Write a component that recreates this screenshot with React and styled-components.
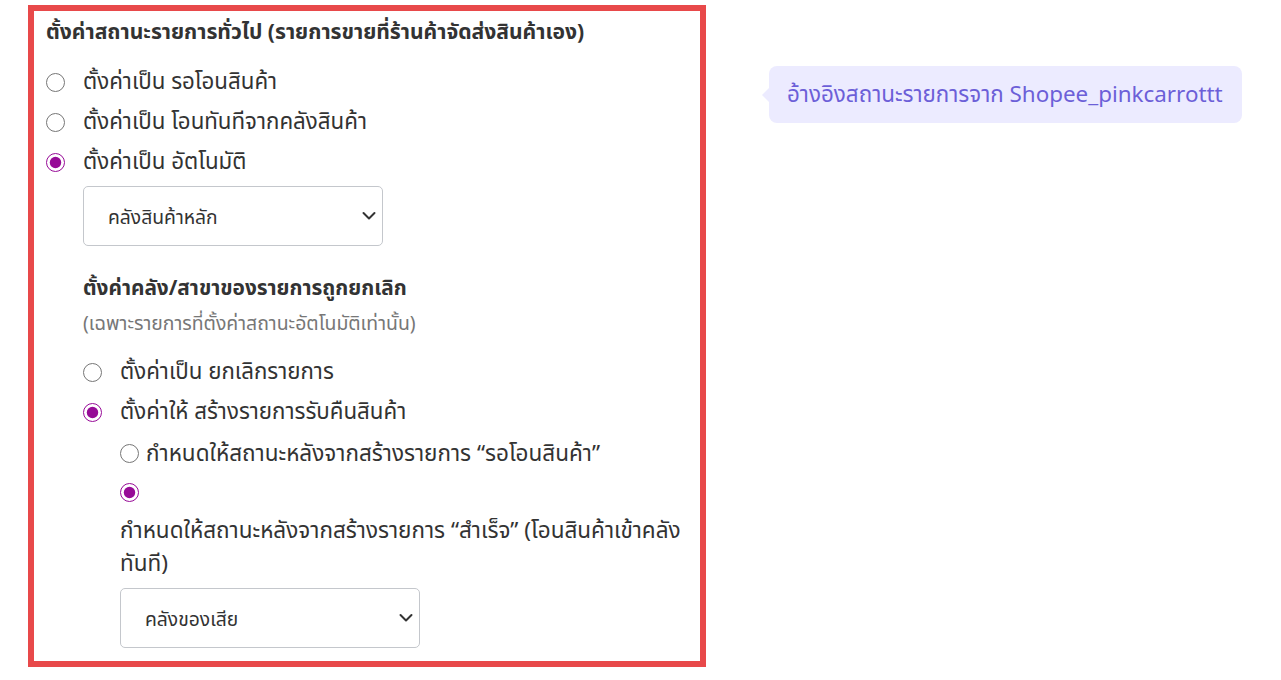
import React from "react";
import styled, { createGlobalStyle } from "styled-components";

const Global = createGlobalStyle`
  html, body { margin: 0; padding: 0; background: #fff; }
  body { font-family: "Noto Sans", "Noto Sans Thai", sans-serif; color: #333; }
  * { box-sizing: border-box; }
`;

const Page = styled.div`
  display: flex;
  align-items: flex-start;
  gap: 63px;
  padding: 5px 0 0 28px;
`;

const Panel = styled.section`
  width: 678px;
  border: 6px solid #e8494a;
  padding: 3px 12px 13px 12px;
`;

const Title = styled.h3`
  margin: 0 0 14px;
  font-size: 21.1px;
  font-weight: 700;
  line-height: 34px;
  color: #333;
  white-space: nowrap;
`;

const SubTitle = styled.h4`
  margin: 24px 0 0 37px;
  font-size: 20.8px;
  font-weight: 700;
  line-height: 34px;
  color: #333;
`;

const Note = styled.div`
  margin: 6px 0 16px 37px;
  font-size: 19.4px;
  line-height: 26px;
  color: #777;
`;

const Option = styled.label`
  display: flex;
  align-items: center;
  gap: 18px;
  height: 40px;
  margin-left: ${(p) => p.$indent || 0}px;
  font-size: 22.3px;
  color: #333;
  white-space: nowrap;
`;

const Radio = styled.input.attrs({ type: "radio" })`
  margin: 0;
  width: 19px;
  height: 19px;
  accent-color: #970b97;
  flex: none;
`;

const Nested = styled.div`
  margin-left: 74px;
  font-size: 22.5px;
  line-height: 33px;
  color: #333;
`;

const NestedRow = styled.div`
  padding-top: ${(p) => p.$top || 0}px;
`;

const InlineRadio = styled(Radio)`
  vertical-align: -2px;
  margin-right: 7px;
`;

const InlineLabel = styled.span`
  display: inline-block;
  margin-top: ${(p) => p.$gap || 0}px;
`;

const SelectBox = styled.div`
  position: relative;
  width: 300px;
  margin: ${(p) => p.$margin};
`;

const Select = styled.select`
  appearance: none;
  -webkit-appearance: none;
  width: 300px;
  height: 60px;
  padding: 0 40px 0 24px;
  border: 1px solid #c4c7cc;
  border-radius: 5px;
  background: #fff;
  font-family: inherit;
  font-size: 19.3px;
  color: #333;
  display: block;
`;

const Chevron = styled.svg`
  position: absolute;
  right: 7px;
  top: 50%;
  transform: translateY(-50%);
  pointer-events: none;
`;

const Tip = styled.div`
  position: relative;
  margin-top: 61px;
  background: #ecebff;
  color: #6c5fd8;
  border-radius: 8px;
  padding: 0 19px 0 18px;
  height: 57px;
  display: flex;
  align-items: center;
  font-size: 22.4px;
  white-space: nowrap;
  &::before {
    content: "";
    position: absolute;
    left: -7px;
    top: 50%;
    transform: translateY(-50%);
    border-top: 7px solid transparent;
    border-bottom: 7px solid transparent;
    border-right: 7px solid #ecebff;
  }
`;

function Dropdown({ value, label, margin }) {
  return (
    <SelectBox $margin={margin}>
      <Select defaultValue={value}>
        <option value={value}>{label}</option>
      </Select>
      <Chevron width="14" height="9" viewBox="0 0 14 9" fill="none">
        <path d="M1.5 1.5 L7 7 L12.5 1.5" stroke="#333" strokeWidth="2" strokeLinecap="round" strokeLinejoin="round" />
      </Chevron>
    </SelectBox>
  );
}

export default function App() {
  return (
    <>
      <Global />
      <Page>
        <Panel>
          <Title>ตั้งค่าสถานะรายการทั่วไป (รายการขายที่ร้านค้าจัดส่งสินค้าเอง)</Title>
          <Option>
            <Radio name="g1" />
            ตั้งค่าเป็น รอโอนสินค้า
          </Option>
          <Option>
            <Radio name="g1" />
            ตั้งค่าเป็น โอนทันทีจากคลังสินค้า
          </Option>
          <Option>
            <Radio name="g1" defaultChecked />
            ตั้งค่าเป็น อัตโนมัติ
          </Option>
          <Dropdown value="main" label="คลังสินค้าหลัก" margin="4px 0 0 37px" />
          <SubTitle>ตั้งค่าคลัง/สาขาของรายการถูกยกเลิก</SubTitle>
          <Note>(เฉพาะรายการที่ตั้งค่าสถานะอัตโนมัติเท่านั้น)</Note>
          <Option $indent={37}>
            <Radio name="g2" />
            ตั้งค่าเป็น ยกเลิกรายการ
          </Option>
          <Option $indent={37}>
            <Radio name="g2" defaultChecked />
            ตั้งค่าให้ สร้างรายการรับคืนสินค้า
          </Option>
          <Nested>
            <NestedRow $top={4}>
              <InlineRadio name="g3" />
              <InlineLabel>กำหนดให้สถานะหลังจากสร้างรายการ “รอโอนสินค้า”</InlineLabel>
            </NestedRow>
            <NestedRow $top={6}>
              <InlineRadio name="g3" defaultChecked />
              <InlineLabel $gap={5}>กำหนดให้สถานะหลังจากสร้างรายการ “สำเร็จ” (โอนสินค้าเข้าคลังทันที)</InlineLabel>
            </NestedRow>
            <Dropdown value="bad" label="คลังของเสีย" margin="9px 0 0 0" />
          </Nested>
        </Panel>
        <Tip>อ้างอิงสถานะรายการจาก Shopee_pinkcarrottt</Tip>
      </Page>
    </>
  );
}
